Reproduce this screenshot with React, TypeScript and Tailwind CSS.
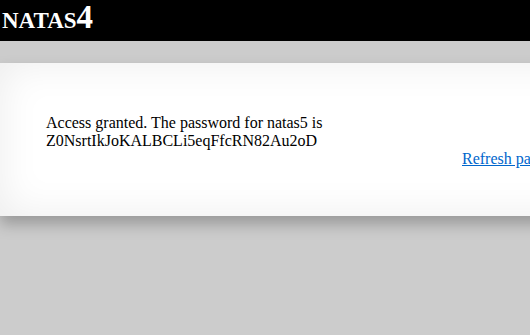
export default function App() {
  return (
    <div className="min-h-screen bg-[#cccccc] overflow-hidden font-['Liberation_Serif',serif] text-black">
      {/* Header */}
      <div className="h-[41px] bg-black pl-[2px]">
        <h1 className="text-[33px] leading-[35px] font-bold text-white [font-variant:small-caps]">natas4</h1>
      </div>

      {/* Content card */}
      <div className="mt-[22px] w-[600px] h-[153px] bg-white shadow-[inset_0_0_40px_rgba(0,0,0,0.08),0_8px_14px_rgba(0,0,0,0.25)]">
        <div className="pt-[51px] pl-[46px] text-[16px] leading-[18px]">
          Access granted. The password for natas5 is
          <br />
          Z0NsrtIkJoKALBCLi5eqFfcRN82Au2oD
        </div>
        <div className="pl-[462px] text-[16px] leading-[18px]">
          <a href="#" className="text-[#0066cc] underline">Refresh page</a>
        </div>
      </div>
    </div>
  );
}
